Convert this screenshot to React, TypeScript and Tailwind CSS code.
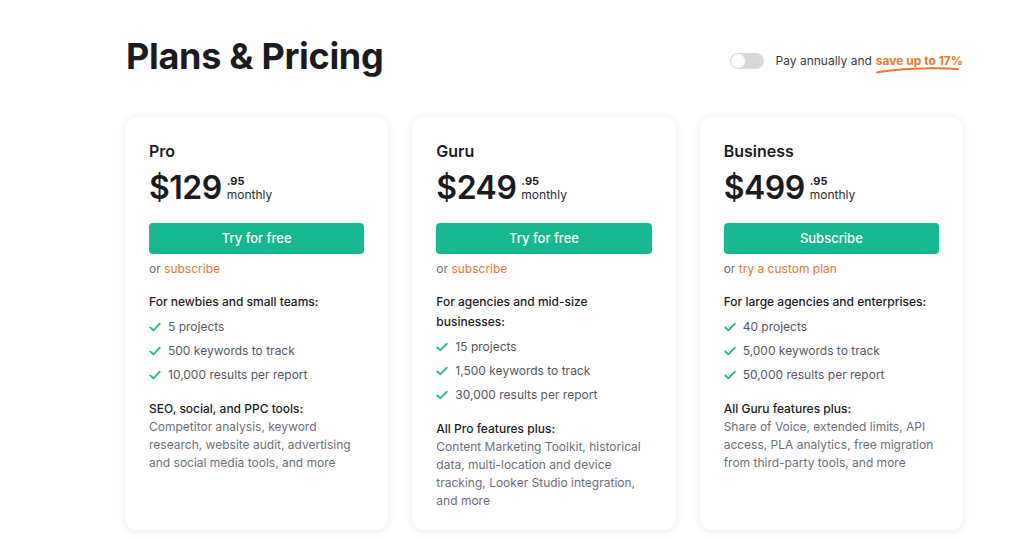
import React from 'react'

type Plan = {
  name: string
  price: string
  cta: string
  alt: string
  audience: string
  limits: string[]
  extraTitle: string
  extra: string
}

const PLANS: Plan[] = [
  {
    name: 'Pro',
    price: '$129',
    cta: 'Try for free',
    alt: 'subscribe',
    audience: 'For newbies and small teams:',
    limits: ['5 projects', '500 keywords to track', '10,000 results per report'],
    extraTitle: 'SEO, social, and PPC tools:',
    extra: 'Competitor analysis, keyword research, website audit, advertising and social media tools, and more',
  },
  {
    name: 'Guru',
    price: '$249',
    cta: 'Try for free',
    alt: 'subscribe',
    audience: 'For agencies and mid-size businesses:',
    limits: ['15 projects', '1,500 keywords to track', '30,000 results per report'],
    extraTitle: 'All Pro features plus:',
    extra: 'Content Marketing Toolkit, historical data, multi-location and device tracking, Looker Studio integration, and more',
  },
  {
    name: 'Business',
    price: '$499',
    cta: 'Subscribe',
    alt: 'try a custom plan',
    audience: 'For large agencies and enterprises:',
    limits: ['40 projects', '5,000 keywords to track', '50,000 results per report'],
    extraTitle: 'All Guru features plus:',
    extra: 'Share of Voice, extended limits, API access, PLA analytics, free migration from third-party tools, and more',
  },
]

function Check() {
  return (
    <svg width="12" height="10" viewBox="0 0 12 10" className="shrink-0">
      <path d="M1.2 5.4 L4.4 8.4 L10.8 1.6" fill="none" stroke="#1fb58e" strokeWidth="1.8" strokeLinecap="round" strokeLinejoin="round" />
    </svg>
  )
}

function PlanCard({ plan }: { plan: Plan }) {
  return (
    <div className="h-[413px] rounded-xl bg-white px-6 pt-6 shadow-[0_1px_10px_rgba(0,0,0,0.09)]">
      <h2 className="text-[16px] font-semibold leading-5 text-[#1b1b1f]">{plan.name}</h2>
      <div className="mt-[9px] flex items-center gap-[5px]">
        <span className="text-[32px] font-semibold leading-[36px] tracking-[-0.5px] text-[#1b1b1f]">{plan.price}</span>
        <div className="flex flex-col">
          <span className="text-[11px] font-bold leading-[12px] text-[#1b1b1f]">.95</span>
          <span className="text-[12px] leading-[15px] text-[#2a2b30]">monthly</span>
        </div>
      </div>
      <button className="mt-[17px] h-[31px] w-full rounded-[4px] bg-[#17b890] text-[13px] font-medium text-white">
        {plan.cta}
      </button>
      <p className="mt-[7px] text-[12px] leading-4 text-[#6c6e79]">
        or <span className="text-[#f0742f]">{plan.alt}</span>
      </p>
      <p className="mt-[15px] text-[12px] font-medium leading-5 text-[#1b1b1f]">{plan.audience}</p>
      <ul className="mt-[3px]">
        {plan.limits.map((l) => (
          <li key={l} className="flex h-6 items-center gap-[7px] text-[12px] text-[#55575f]">
            <Check />
            {l}
          </li>
        ))}
      </ul>
      <p className="mt-[13px] text-[12px] font-medium leading-[18px] text-[#1b1b1f]">{plan.extraTitle}</p>
      <p className="text-[12px] leading-[18px] text-[#6c6e79]">{plan.extra}</p>
    </div>
  )
}

export default function App() {
  return (
    <div className="h-[538px] w-[1024px] overflow-hidden bg-white font-['Inter','Noto_Sans',sans-serif]">
      <div className="ml-[125px] w-[838px]">
        <div className="flex items-start justify-between pt-[36px]">
          <h1 className="pl-[1px] text-[36px] font-bold leading-[40px] tracking-[-0.3px] text-[#1b1b1f]">Plans &amp; Pricing</h1>
          <div className="mt-[16px] flex items-center">
            <div className="relative h-[16px] w-[34px] rounded-full bg-[#d6d8de]">
              <div className="absolute left-[1px] top-[1px] h-[14px] w-[14px] rounded-full bg-white" />
            </div>
            <span className="ml-[12px] text-[12px] text-[#3a3b42]">Pay annually and</span>
            <span className="relative ml-[4px] text-[12px] font-bold text-[#f0742f]">
              save up to 17%
              <svg className="absolute left-0 top-[14px]" width="86" height="8" viewBox="0 0 86 8">
                <path d="M1 6.5 C 20 2.5, 55 1.5, 82 3" fill="none" stroke="#f0742f" strokeWidth="2" strokeLinecap="round" />
              </svg>
            </span>
          </div>
        </div>
        <div className="mt-[41px] grid grid-cols-3 gap-[24px]">
          {PLANS.map((p) => (
            <PlanCard key={p.name} plan={p} />
          ))}
        </div>
      </div>
    </div>
  )
}
